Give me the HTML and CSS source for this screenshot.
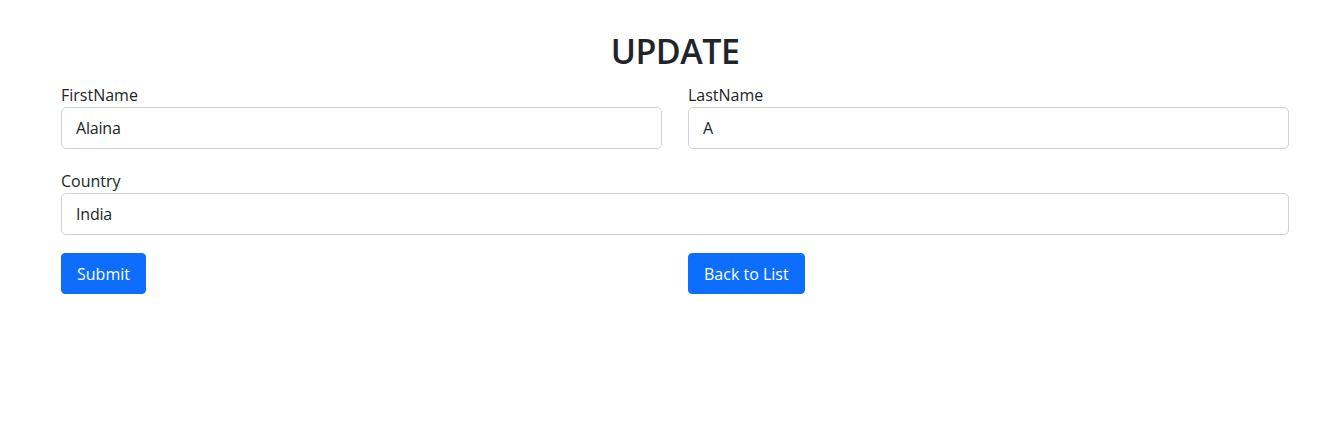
FILE: index.html
```html
<!DOCTYPE html>
<html lang="en">
<head>
<meta charset="utf-8">
<title>Update</title>
<link rel="stylesheet" href="styles.css">
</head>
<body>
<main class="page">
  <h1 class="title">UPDATE</h1>
  <form class="form">
    <div class="row two">
      <div class="field">
        <label class="label" for="fn">FirstName</label>
        <input class="input" id="fn" type="text" value="Alaina">
      </div>
      <div class="field">
        <label class="label" for="ln">LastName</label>
        <input class="input" id="ln" type="text" value="A">
      </div>
    </div>
    <div class="row">
      <div class="field">
        <label class="label" for="co">Country</label>
        <input class="input" id="co" type="text" value="India">
      </div>
    </div>
    <div class="row two actions">
      <div><button class="btn" type="button">Submit</button></div>
      <div><button class="btn" type="button">Back to List</button></div>
    </div>
  </form>
</main>
</body>
</html>
```
FILE: styles.css
```css
* { box-sizing: border-box; }
html, body { margin: 0; background: #fff; }
body {
  font-family: "Open Sans", "Noto Sans", "Liberation Sans", sans-serif;
  font-size: 16px;
  line-height: 1.5;
  color: #212529;
}
.page {
  padding: 30px 41px 0 61px;
}
.title {
  margin: 0 0 10px;
  text-align: center;
  font-size: 34px;
  font-weight: 600;
  line-height: 43px;
  letter-spacing: -0.5px;
}
.form { display: flex; flex-direction: column; gap: 20px; }
.row { display: grid; grid-template-columns: 1fr; }
.row.two { grid-template-columns: 1fr 1fr; column-gap: 26px; }
.actions { margin-top: -2px; }
.field { display: flex; flex-direction: column; }
.label {
  display: block;
  height: 24px;
  font-size: 16px;
}
.input {
  height: 42px;
  width: 100%;
  border: 1px solid #ced4da;
  border-radius: 5px;
  padding: 0 14px;
  font-family: inherit;
  font-size: 16px;
  letter-spacing: -0.2px;
  color: #212529;
  background: #fff;
}
.btn {
  height: 41px;
  padding: 0 15px;
  border: 1px solid #0d6efd;
  border-radius: 4px;
  background: #0d6efd;
  color: #fff;
  font-family: inherit;
  font-size: 16px;
  letter-spacing: 0;
}
```
